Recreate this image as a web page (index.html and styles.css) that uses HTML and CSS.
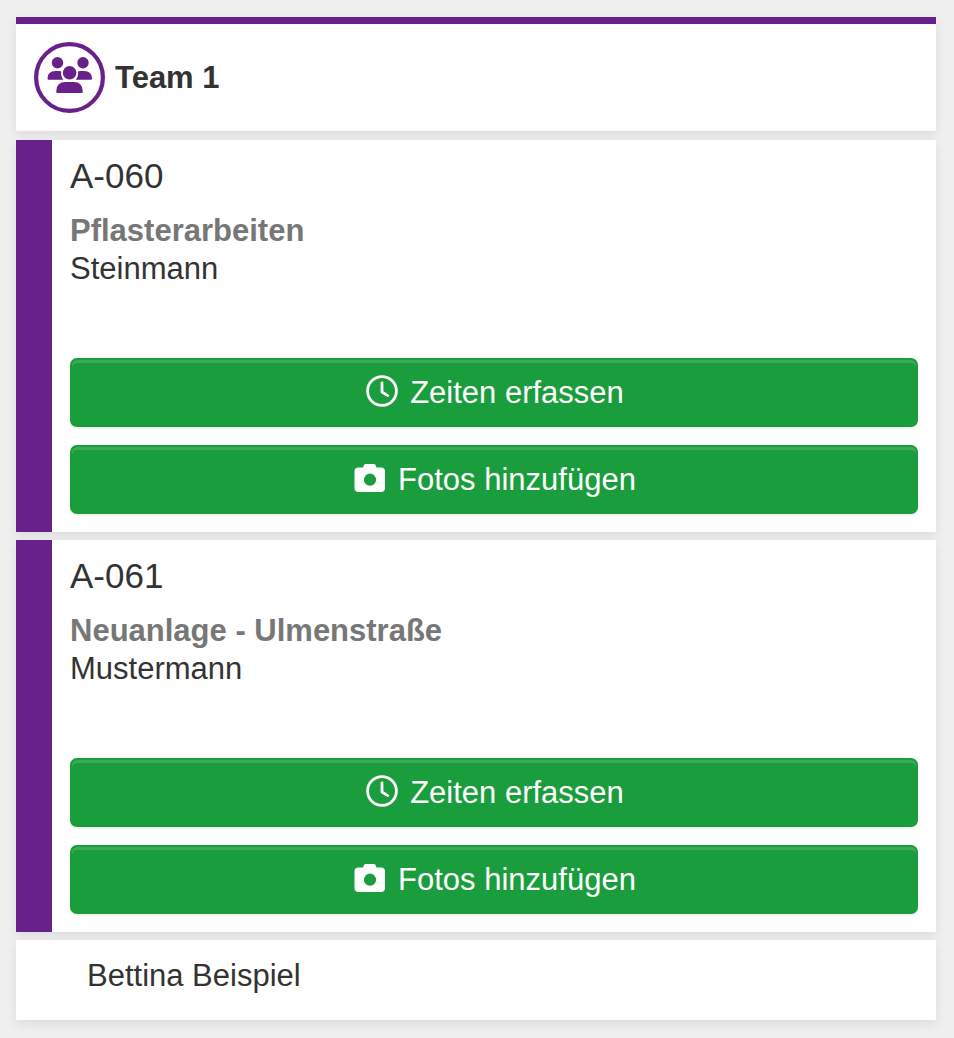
FILE: index.html
```html
<!DOCTYPE html>
<html lang="de">
<head>
<meta charset="UTF-8">
<meta name="viewport" content="width=device-width, initial-scale=1.0">
<title>Team 1</title>
<link rel="stylesheet" href="styles.css">
</head>
<body>

<svg class="sprite" aria-hidden="true">
    <symbol id="icon-clock" viewBox="0 0 32 32">
        <circle cx="16" cy="16" r="14.4" fill="none" stroke="currentColor" stroke-width="2.8"/>
        <path d="M16 8v9l5.8 3.6" fill="none" stroke="currentColor" stroke-width="2.8" stroke-linecap="round" stroke-linejoin="round"/>
    </symbol>
    <symbol id="icon-camera" viewBox="0 0 32 32">
        <path fill="currentColor" fill-rule="evenodd" d="M4.5 5.5H9l.9-2.3Q10.400 2 11.700 2h8.100q1.300 0 1.800 1.200l.9 2.300h4.500q4 0 4 4v16.500q0 4-4 4H4.500q-4 0-4-4V9.500q0-4 4-4zM16 11.600a6.100 6.100 0 1 0 0 12.200a6.100 6.100 0 1 0 0-12.200z"/>
    </symbol>
</svg>

<main class="board">
    <header class="card team">
        <svg class="team-icon" viewBox="0 0 71 71" aria-hidden="true">
            <circle cx="35.500" cy="35.500" r="33.400" fill="none" stroke="currentColor" stroke-width="4.200"/>
            <g fill="currentColor">
                <circle cx="23.500" cy="20.700" r="5.700"/>
                <circle cx="49" cy="20.700" r="5.700"/>
                <circle cx="35.600" cy="30.700" r="6.800"/>
                <path d="M13.500 36.500q0-7.500 8-7.500h4q1 0 1.800.4q-.9 4.900 2.200 8.300H14.500q-1 0-1-1.200z"/>
                <path d="M58 36.500q0-7.500-8-7.500h-4q-1 0-2.100.4q.9 4.900-2.200 8.300H57q1 0 1-1.200z"/>
                <path d="M22.200 49.500q0-9.500 9.300-9.500h8q9.300 0 9.300 9.500q0 1.500-1.500 1.500H23.700q-1.500 0-1.500-1.500z"/>
            </g>
        </svg>
        <h1 class="team-name">Team 1</h1>
    </header>

    <section class="card job">
        <h2 class="job-number">A-060</h2>
        <div class="job-title">Pflasterarbeiten</div>
        <div class="job-customer">Steinmann</div>
        <div class="actions">
            <button type="button" class="btn"><svg class="icon" aria-hidden="true"><use href="#icon-clock"/></svg>Zeiten erfassen</button>
            <button type="button" class="btn"><svg class="icon" aria-hidden="true"><use href="#icon-camera"/></svg>Fotos hinzufügen</button>
        </div>
    </section>

    <section class="card job">
        <h2 class="job-number">A-061</h2>
        <div class="job-title">Neuanlage - Ulmenstraße</div>
        <div class="job-customer">Mustermann</div>
        <div class="actions">
            <button type="button" class="btn"><svg class="icon" aria-hidden="true"><use href="#icon-clock"/></svg>Zeiten erfassen</button>
            <button type="button" class="btn"><svg class="icon" aria-hidden="true"><use href="#icon-camera"/></svg>Fotos hinzufügen</button>
        </div>
    </section>

    <div class="card member">Bettina Beispiel</div>
</main>

</body>
</html>
```

FILE: styles.css
```css
* { box-sizing: border-box; }
body {
    margin: 0;
    padding: 17px 18px 17px 16px;
    background: #efefef;
    color: #333;
    font-family: "Liberation Sans", Arial, sans-serif;
    font-size: 31px;
    line-height: 38px;
}
.sprite { display: none; }
.board {
    display: flex;
    flex-direction: column;
    gap: 8px;
}
.card {
    background: white;
    box-shadow: 0 4px 10px rgba(0,0,0,0.08);
}

/* team header */
.team {
    display: flex;
    align-items: center;
    gap: 10px;
    margin-bottom: 1px;
    padding: 18px;
    border-top: 7px solid #68218b;
}
.team-icon {
    width: 71px;
    height: 71px;
    color: #68218b;
}
.team-name { margin: 0; font-size: 31px; }

/* jobs */
.job {
    padding: 14px 18px 18px;
    border-left: 36px solid #68218b;
}
.job-number {
    margin: 0 0 14px;
    font-size: 35px;
    font-weight: normal;
    line-height: 44px;
}
.job-title { color: #777; font-weight: bold; }
.actions {
    display: flex;
    flex-direction: column;
    gap: 18px;
    margin-top: 70px;
}
.btn {
    display: flex;
    align-items: center;
    justify-content: center;
    gap: 12px;
    height: 69px;
    padding: 0 14px 0 16px;
    background: #1a9d3c;
    border: 2px solid #1a9d3c;
    border-radius: 7px;
    box-shadow: inset 0 3px 0 rgba(255,255,255,0.15), 0 2px 2px rgba(0,0,0,0.06);
    color: white;
    font: inherit;
    cursor: pointer;
}
.btn:hover { background: #178a35; }
.icon { width: 32px; height: 32px; margin-bottom: 4px; }

.member { padding: 17px 71px 25px; }
```
